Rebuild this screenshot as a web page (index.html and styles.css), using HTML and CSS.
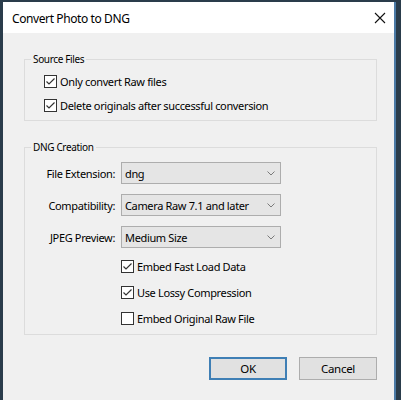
FILE: index.html
```html
<!DOCTYPE html>
<html>
<head>
<meta charset="utf-8">
<link rel="stylesheet" href="styles.css">
</head>
<body>
<div class="window">
  <div class="titlebar">
    <span class="title">Convert Photo to DNG</span>
    <svg class="close" width="12" height="12" viewBox="0 0 12 12"><path d="M1 1L11 11M11 1L1 11" stroke="#111" stroke-width="1.1" fill="none"/></svg>
  </div>
  <div class="content">
    <fieldset class="group">
      <legend>Source Files</legend>
      <div class="group-body src">
        <label class="check"><span class="box checked"><svg width="11" height="11" viewBox="0 0 11 11"><path d="M1.5 5.5L4 8L9.5 2.5" stroke="#333" stroke-width="1.2" fill="none"/></svg></span>Only convert Raw files</label>
        <label class="check"><span class="box checked"><svg width="11" height="11" viewBox="0 0 11 11"><path d="M1.5 5.5L4 8L9.5 2.5" stroke="#333" stroke-width="1.2" fill="none"/></svg></span>Delete originals after successful conversion</label>
      </div>
    </fieldset>
    <fieldset class="group dng">
      <legend>DNG Creation</legend>
      <div class="group-body form">
        <span class="lbl">File Extension:</span>
        <div class="select"><span>dng</span><svg class="chev" width="8" height="5" viewBox="0 0 8 5"><path d="M0.5 0.5L4 4L7.5 0.5" stroke="#7a7a7a" fill="none"/></svg></div>
        <span class="lbl">Compatibility:</span>
        <div class="select"><span>Camera Raw 7.1 and later</span><svg class="chev" width="8" height="5" viewBox="0 0 8 5"><path d="M0.5 0.5L4 4L7.5 0.5" stroke="#7a7a7a" fill="none"/></svg></div>
        <span class="lbl">JPEG Preview:</span>
        <div class="select"><span>Medium Size</span><svg class="chev" width="8" height="5" viewBox="0 0 8 5"><path d="M0.5 0.5L4 4L7.5 0.5" stroke="#7a7a7a" fill="none"/></svg></div>
        <div class="checks">
          <label class="check"><span class="box checked"><svg width="11" height="11" viewBox="0 0 11 11"><path d="M1.5 5.5L4 8L9.5 2.5" stroke="#333" stroke-width="1.2" fill="none"/></svg></span>Embed Fast Load Data</label>
          <label class="check"><span class="box checked"><svg width="11" height="11" viewBox="0 0 11 11"><path d="M1.5 5.5L4 8L9.5 2.5" stroke="#333" stroke-width="1.2" fill="none"/></svg></span>Use Lossy Compression</label>
          <label class="check"><span class="box"></span>Embed Original Raw File</label>
        </div>
      </div>
    </fieldset>
    <div class="buttons">
      <button class="btn default">OK</button>
      <button class="btn">Cancel</button>
    </div>
  </div>
</div>
</body>
</html>
```
FILE: styles.css
```css
html, body {
  margin: 0;
  padding: 0;
}
body {
  background: #2a3c4b;
  width: 401px;
  height: 400px;
  overflow: hidden;
  font-family: "Noto Sans", "Liberation Sans", sans-serif;
  font-size: 11px;
  letter-spacing: -0.35px;
  color: #000;
}
.window {
  margin: 2px 0 0 3px;
  width: 391px;
  height: 398px;
  background: #f0f0f0;
  border-right: 2px solid #4b7aa6;
}
.titlebar {
  height: 31px;
  background: #fff;
  display: flex;
  align-items: center;
  justify-content: space-between;
  padding: 0 8px 0 9px;
}
.title {
  font-size: 12px;
  letter-spacing: -0.4px;
  margin-top: 1px;
}
.close {
  margin-top: 1px;
}
.content {
  padding: 19px 17px 0 21px;
}
.group {
  margin: 0;
  padding: 0;
  border: 1px solid #dcdcdc;
  min-width: 0;
}
.group legend {
  margin-left: 6px;
  padding: 0 2px;
  line-height: 14px;
  font-size: 10px;
  letter-spacing: -0.35px;
}
.group-body.src {
  padding: 3px 0 3px 19px;
}
.check {
  display: flex;
  align-items: center;
  height: 24px;
  white-space: nowrap;
}
.box {
  box-sizing: border-box;
  width: 13px;
  height: 13px;
  border: 1px solid #333;
  background: #fff;
  margin-right: 3px;
  display: flex;
  align-items: center;
  justify-content: center;
  flex: none;
}
.group.dng {
  margin-top: 19px;
}
.group-body.form {
  display: grid;
  grid-template-columns: 90px 160px;
  column-gap: 6px;
  row-gap: 10px;
  padding: 8px 0 3px 0;
  align-items: center;
}
.lbl {
  text-align: right;
  white-space: nowrap;
}
.select {
  box-sizing: border-box;
  height: 22px;
  background: #e5e5e5;
  border: 1px solid #adadad;
  display: flex;
  align-items: center;
  justify-content: space-between;
  padding: 0 5px 0 3px;
  white-space: nowrap;
}
.chev {
  flex: none;
}
.checks {
  grid-column: 2;
  margin-top: -5px;
}
.checks .check {
  height: 26px;
}
.buttons {
  display: flex;
  justify-content: flex-end;
  gap: 12px;
  margin-top: 22px;
}
.btn {
  box-sizing: border-box;
  width: 78px;
  height: 23px;
  background: #e1e1e1;
  border: 1px solid #adadad;
  font-family: inherit;
  font-size: 11.5px;
  letter-spacing: -0.3px;
  color: #000;
  padding: 0;
  margin: 0;
}
.btn.default {
  border: 2px solid #3f7fb5;
}
```
